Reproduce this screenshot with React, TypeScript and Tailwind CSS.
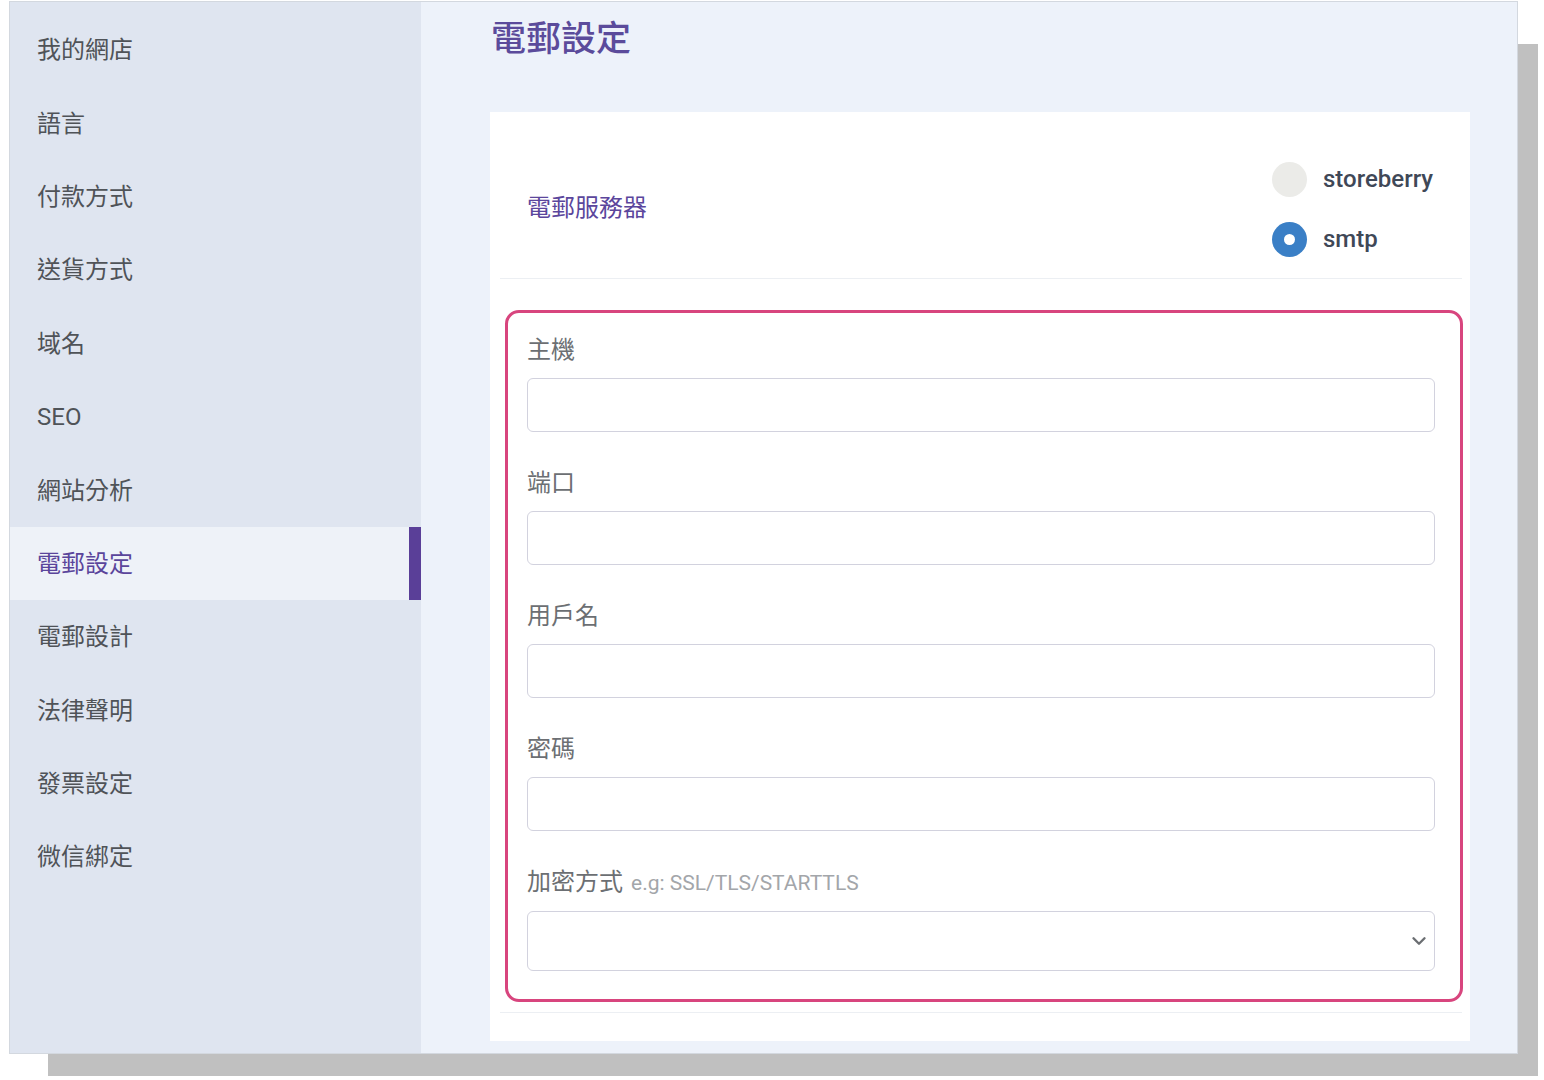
import React from "react";
import { ChevronDown } from "lucide-react";

const FONT = { fontFamily: "Roboto, 'Noto Sans CJK TC', 'Noto Sans', sans-serif" };

const navItems = [
  "我的網店",
  "語言",
  "付款方式",
  "送貨方式",
  "域名",
  "SEO",
  "網站分析",
  "電郵設定",
  "電郵設計",
  "法律聲明",
  "發票設定",
  "微信綁定",
];

function Field({ label }: { label: string }) {
  return (
    <div className="flex flex-col">
      <div className="h-[28px] leading-[28px] text-[24px] text-[#6c6f73]">{label}</div>
      <div className="mt-[14px] h-[54px] rounded-[6px] border-[1.5px] border-[#d2d2de] bg-white" />
    </div>
  );
}

export default function App() {
  return (
    <div className="relative w-[1544px] h-[1080px] bg-white overflow-hidden" style={FONT}>
      {/* shadow */}
      <div className="absolute left-[48px] top-[44px] w-[1490px] h-[1032px] bg-[#c0c0c0]" />
      {/* window */}
      <div className="absolute left-[9px] top-[1px] w-[1509px] h-[1053px] border border-[#d3d8df] flex bg-[#edf2fa]">
        {/* sidebar */}
        <div className="w-[411px] h-full bg-[#dfe5f0] pt-[11px] flex flex-col">
          {navItems.map((item) => {
            const active = item === "電郵設定";
            return (
              <div
                key={item}
                className={
                  active
                    ? "h-[73.4px] flex items-center justify-between bg-[#eef2f8]"
                    : "h-[73.4px] flex items-center"
                }
              >
                <span
                  className={
                    active
                      ? "pl-[27px] pt-[1px] text-[24px] text-[#5a459b]"
                      : "pl-[27px] pt-[1px] text-[24px] text-[#4f5358]"
                  }
                >
                  {item}
                </span>
                {active && <div className="w-[12px] h-full bg-[#5a3f98]" />}
              </div>
            );
          })}
        </div>
        {/* main */}
        <div className="flex-1 h-full pl-[69px] pr-[47px] pt-[17px] flex flex-col">
          <h1 className="text-[35px] leading-[42px] font-medium text-[#5b4b9b] pl-[1px]">電郵設定</h1>
          <div className="mt-[51px] h-[929px] bg-white flex flex-col">
            {/* header row */}
            <div className="ml-[10px] mr-[8px] pl-[27px] pr-[27px] pt-[50px] pb-[21px] flex items-center justify-between border-b border-[#eceff3]">
              <div className="text-[24px] text-[#5b469c] pb-[4px]">電郵服務器</div>
              <div className="flex flex-col gap-[25px] w-[163px]">
                <div className="flex items-center h-[35px] gap-[16px]">
                  <div className="w-[35px] h-[35px] rounded-full bg-[#ebebe8]" />
                  <span className="text-[24px] font-medium text-[#3f4857] pb-[2px]">storeberry</span>
                </div>
                <div className="flex items-center h-[35px] gap-[16px]">
                  <div className="w-[35px] h-[35px] rounded-full bg-[#3a7fc6] flex items-center justify-center">
                    <div className="w-[11px] h-[11px] rounded-full bg-white" />
                  </div>
                  <span className="text-[24px] font-medium text-[#3f4857] pb-[2px]">smtp</span>
                </div>
              </div>
            </div>
            {/* highlighted form */}
            <div className="mt-[31px] ml-[15px] mr-[7px] border-[3px] border-[#d8457e] rounded-[14px] pl-[19px] pr-[25px] pt-[23px] pb-[28px] flex flex-col gap-[37px]">
              <Field label="主機" />
              <Field label="端口" />
              <Field label="用戶名" />
              <Field label="密碼" />
              <div className="flex flex-col">
                <div className="h-[28px] leading-[28px] flex items-baseline">
                  <span className="text-[24px] text-[#6c6f73]">加密方式</span>
                  <span className="ml-[8px] text-[21px] text-[#a3a6aa]">e.g: SSL/TLS/STARTTLS</span>
                </div>
                <div className="relative mt-[15px] h-[60px] rounded-[6px] border-[1.5px] border-[#d2d2de] bg-white">
                  <ChevronDown
                    className="absolute right-[4px] top-[18px] text-[#6b6e72]"
                    size={22}
                    strokeWidth={2.6}
                  />
                </div>
              </div>
            </div>
            <div className="mt-[10px] ml-[10px] mr-[8px] border-b border-[#eceff3]" />
          </div>
        </div>
      </div>
    </div>
  );
}
